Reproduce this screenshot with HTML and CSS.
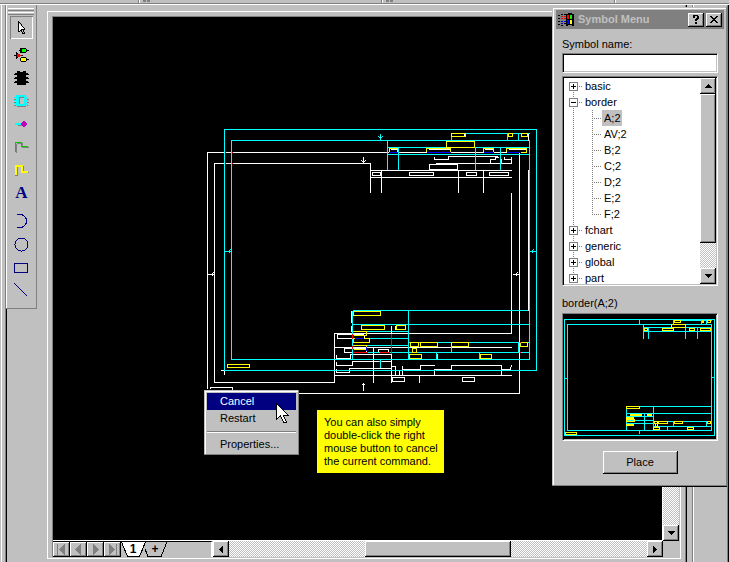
FILE: index.html
```html
<!DOCTYPE html>
<html lang="en">
<head>
<meta charset="utf-8">
<title>Schematic editor</title>
<link rel="stylesheet" href="styles.css">
</head>
<body>
<header class="strip"><i class="strip-a"></i><i class="strip-b"></i><i class="strip-c"></i></header>
<div class="workspace">
  <div class="rail"></div>
  <aside class="dock">
    <div class="toolbar" role="toolbar" aria-label="Drawing tools">
      <div class="grip"></div><div class="grip"></div>
      <button class="tool active" aria-label="Select"><svg width="15" height="15"><path d="M5 3l5 6H7l-2 2z" fill="#fff"/><path d="M4 1h1v11H4zM5 2h1v1H5zM6 3h1v1H6zM7 4h1v2H7zM8 6h1v1H8zM9 7h1v1H9zM10 8h1v1h-1zM7 9h4v1H7zM5 11h1v-1h1v1H6v1H5zM7 10h1v2H7zM8 12h1v2H8zM9 10h1v2H9zM10 12h1v2h-1zM8 13h2v1H8z"/></svg></button>
      <button class="tool group" aria-label="Gates"><svg width="15" height="15"><path d="M0 8h9v1H0zM5 3h10v1H5zM6 12h9v1H6zM2 5h1v7H2zM3 6h1v5H3z"/><path d="M6 1h6v1h1v3h-1v1H6zM7 10h5v1h1v3h-1v1H7v-1H6v-3h1z"/><path d="M3 7h3v1h1v1H6v1H3z" fill="#f00"/><path d="M8 2h4v3H8z" fill="#0f0"/><path d="M7 11h5v3H7z" fill="#ff0"/></svg></button>
      <button class="tool" aria-label="Chip"><svg width="15" height="15"><path d="M3 1h3v1h3V1h3v14H3z"/><path d="M1 3h13v1H1zM0 4h15v1H0zM1 7h13v1H1zM0 8h15v1H0zM1 11h13v1H1zM0 12h15v1H0z"/></svg></button>
      <button class="tool" aria-label="Block"><svg width="15" height="15"><path d="M3 13h9v1H3zM12 4h1v1h-1zM13 6h2v1h-2zM13 9h2v1h-2zM13 12h1v1h-1zM0 6h2v1H0zM0 9h2v1H0zM0 12h2v1H0zM5 4h5v1H6v6H5z" fill="#808080"/><path d="M3 2h9v2h2v2h-2v1h2v2h-2v1h2v2h-2v1H2v-2H0v-1h2V8H0V7h2V5H0V4h2V2zM5 4v7h5V4z" fill="#0ff" fill-rule="evenodd"/></svg></button>
      <button class="tool" aria-label="Pin"><svg width="15" height="15"><path d="M1 7h7v2H1z" fill="#0ff"/><path d="M4 9h5v1H4z" fill="#808080"/><path d="M9 5h2v1h1v1h1v2h-1v1h-1v1H9v-1H8V9H7V7h1V6h1z" fill="#c000c0"/></svg></button>
      <button class="tool" aria-label="Net"><svg width="15" height="15"><path d="M2 5h1v9H2zM3 4h6v1H3zM8 4h1v5H8zM8 8h7v1H8z" fill="#808080"/><path d="M1 3h1v10H1zM2 3h6v1H2zM7 4h1v4H7zM8 7h6v1H8z" fill="#0c0"/></svg></button>
      <button class="tool" aria-label="Bus"><svg width="15" height="15"><path d="M3 5h1v9H1v-1h2zM9 4h1v5H9zM8 11h7v-1h-1v1z" fill="#808080"/><path d="M1 3h8v6h5v2H7V5H3v8H1z" fill="#ff0"/></svg></button>
      <button class="tool letter" aria-label="Text">A</button>
      <button class="tool group arc" aria-label="Arc"><svg width="15" height="15"><path d="M3 .500h3a6.500 6.500 0 0 1 0 13H3" class="navy"/></svg></button>
      <button class="tool" aria-label="Circle"><svg width="15" height="15"><circle cx="7.500" cy="7.500" r="6.500" class="navy"/></svg></button>
      <button class="tool" aria-label="Rectangle"><svg width="15" height="15"><path d="M.500 3.500h13v9H.500z" class="navy"/></svg></button>
      <button class="tool" aria-label="Line"><svg width="15" height="15"><path d="M.500 .500l13 13" class="navy"/></svg></button>
    </div>
  </aside>
  <main class="frame">
    <div class="view">
      <div class="canvas">
        <svg class="sheet" width="609" height="522" viewBox="53 17 609 522" role="img" aria-label="Border sheet">
          <g transform="translate(.5 .5)" fill="none">
            <g stroke="#fff">
              <path d="M207 388V152H519V393H232M214 382V163H370V192M214 382H334V333H511V192M528 169V310M351 310v12M351 325v6M464 133v3M528 133v7"/>
              <path d="M434 156v3h14v-3h49M435 163h76v-7M490 163v-4h5v-2h3M501 163v-5M504 156v3h6M429 164h28v5h-28z"/>
              <path d="M370 170H511M370 177H511M381 170V192M458 170V192M483 170V192M372 172h8v3h-8zM409 172h24v3h-24zM466 172h10v3h-10zM489 172h19v3h-19z"/>
              <path d="M336 334h27M337 334v4h15M364 334v4M334 347H511M344 348h22v4h-22zM378 349h10v3h-10zM395 325v4"/>
              <path d="M336 354v4h14v-4h41M336 361v4h16v-4h39M336 368v4h13v-4h42M334 375H511M373 347V382M391 325V382"/>
              <path d="M391 366h4v9M399 375v-5M402 365v4h18v-4h14M402 370v5M434 375v-6h17v-4h50v10M501 369h9l1-4M419 375v7M437 353v6M404 381h-12v-4h12zM474 381h-12v-4h12z"/>
              <path d="M363 156v7M361 160l2 2 2-2M207 274h7M213 272l-2 2 2 2M512 274h7M517 272l-2 2 2 2M363 390v-7M361 385l2-2 2 2M220 370h9M224 366v8M210 388v-1h22v4"/>
            </g>
            <g stroke="#0ff">
              <path d="M224 129H536V370H224zM231 140H529V359H231zM451 133H529M451 133v7M507 133v7M518 133v7M387 147H529M387 154H529M387 140V169M398 147V169M475 147V169M500 147V169"/>
              <path d="M352 310H529M352 310V359M352 324H529M408 310V359M352 331H408M352 338H408M352 345H408M408 342H529M352 352H529M518 342v10M451 342v10M479 352v7M436 352v7"/>
              <path d="M380 133v7M378 136l2 2 2-2M224 251h7M230 249l-2 2 2 2M529 251h7M533 249l-2 2 2 2M380 367v-7M378 362l2-2 2 2"/>
            </g>
            <g stroke="#fff"><path d="M390 149h6M428 149h21M484 149h8M508 149h17M528 169V310M351 310v12M351 325v6M354 333h12M352 347h14M391 325V331M528 133v7"/></g>
            <path stroke="#ff0" d="M451 133h14v3h-14zM508 133h4v3h-4zM521 133h6v3h-6zM446 141h28v6h-28zM389 151v-3h8v3M426 151v-3h24v3M483 151v-3h10v3M506 151v-3h20v4h-6M353 311h27v4h-27zM361 325h23v4h-23zM396 325h9v4h-9zM353 331h13v4h-13M353 338h16v4h-16zM353 345h13v4h-13M410 342h8v4h-8zM420 342h17v4h-17zM451 342h17v4h-17zM520 342h7v4h-7zM412 348h4v4h-4zM409 354h12v4h-12zM480 354h11v4h-11zM227 364h22v3h-22z"/>
            <path stroke="#00f" d="M388 152h9M426 152h24M483 152h10M506 152h13M354 338h9M366 346v4"/>
            <path stroke="#f00" d="M352 352h15M379 352h10M391 333v20M352 333v5M352 345v3M224 152h1M231 152h1M224 163h1M231 163h1M402 370h1M434 370h1M519 342h1M519 352h1"/>
          </g>
        </svg>
        <div class="menu" role="menu">
          <button class="menu-item chosen" role="menuitem">Cancel</button>
          <button class="menu-item" role="menuitem">Restart</button>
          <hr>
          <button class="menu-item" role="menuitem">Properties...</button>
          <svg class="pointer" width="13" height="21" viewBox="0 0 13 21"><path d="M.500 .500v16l4-4 3 7h3l-3-7h5z" fill="#fff" stroke="#000"/></svg>
        </div>
        <p class="note">You can also simply double-click the right mouse button to cancel the current command.</p>
      </div>
      <div class="vscroll"><button class="sb" aria-label="Scroll down"><svg width="7" height="4"><path d="M0 0h7v1H0zM1 1h5v1H1zM2 2h3v1H2zM3 3h1v1H3z"/></svg></button></div>
      <div class="bottom">
        <div class="tabs">
          <button class="nav" aria-label="First sheet"><svg width="11" height="11"><path d="M1 0h1v11H1zM9 0v11L3 5.500z"/></svg></button>
          <button class="nav" aria-label="Previous sheet"><svg width="11" height="11"><path d="M8 0v11L2 5.500z"/></svg></button>
          <button class="nav" aria-label="Next sheet"><svg width="11" height="11"><path d="M3 0v11l6-5.500z"/></svg></button>
          <button class="nav" aria-label="Last sheet"><svg width="11" height="11"><path d="M2 0v11l6-5.500zM9 0h1v11H9z"/></svg></button>
          <button class="tab"><svg width="25" height="15"><path d="M0 0l6 14h12l6-14z" fill="#fff"/><path d="M.500 0l6 14.500h12l6-14.500" fill="none" stroke="#000"/></svg><b>1</b></button>
          <button class="tab plus"><svg width="25" height="15"><path d="M0 7l3 7.500h13l6-14.500" fill="none" stroke="#000"/></svg><b>+</b></button>
        </div>
        <div class="hscroll">
          <button class="sb" aria-label="Scroll left"><svg width="4" height="7"><path d="M3 0h1v7H3zM2 1h1v5H2zM1 2h1v3H1zM0 3h1v1H0z"/></svg></button>
          <div class="track"></div><div class="thumb"></div><div class="track"></div>
          <button class="sb" aria-label="Scroll right"><svg width="4" height="7"><path d="M0 0h1v7H0zM1 1h1v5H1zM2 2h1v3H2zM3 3h1v1H3z"/></svg></button>
        </div>
      </div>
    </div>
  </main>
  <div class="edge"></div>
  <div class="side"></div>
</div>

<section class="dialog" role="dialog" aria-labelledby="dialog-title">
  <header class="title">
    <svg width="16" height="14"><path d="M0 2h2v1H0zM3 1h2v1H3zM6 1h2v1H6zM0 5h2v1H0zM0 8h2v1H0zM0 11h2v1H0zM6 10h2v1H6zM3 12h2v1H3zM8 1h2V0h4v1h2v12h-2v-1h-4v1H8z"/><path d="M3 3h2v1H3zM6 3h2v1H6zM3 5h2v1H3zM6 5h2v1H6zM9 2h2v4H9z" fill="#f00"/><path d="M3 8h2v1H3zM6 8h2v1H6zM3 10h2v1H3zM9 7h2v4H9z" fill="#00f"/><path d="M12 2h2v4h-2z" fill="#0f0"/><path d="M12 7h2v4h-2z" fill="#ff0"/></svg>
    <h1 id="dialog-title">Symbol Menu</h1>
    <button class="cap" aria-label="Help"><svg width="8" height="9"><path d="M1 0h5v1h1v3H6v1H5v1H3V4h1V3h1V1H3v2H1zM3 7h2v2H3z"/></svg></button>
    <button class="cap" aria-label="Close"><svg width="8" height="8"><path d="M0 0h2v1h1v1h2V1h1V0h2v1H7v1H6v1H5v1h1v1h1v1h1v1H6V6H5V5H3v1H2v1H0V6h1V5h1V4h1V3H2V2H1V1H0z"/></svg></button>
  </header>
  <div class="body">
    <label for="symbol">Symbol name:</label>
    <input id="symbol" type="text">
    <div class="treebox">
      <ul class="tree">
        <li><button class="toggle plus-sign" aria-label="Expand basic"></button><span class="name">basic</span></li>
        <li><button class="toggle" aria-label="Collapse border"></button><span class="name">border</span>
          <ul class="leaves">
            <li><span class="leaf picked">A;2</span></li><li><span class="leaf">AV;2</span></li><li><span class="leaf">B;2</span></li><li><span class="leaf">C;2</span></li><li><span class="leaf">D;2</span></li><li><span class="leaf">E;2</span></li><li><span class="leaf">F;2</span></li>
          </ul></li>
        <li><button class="toggle plus-sign" aria-label="Expand fchart"></button><span class="name">fchart</span></li>
        <li><button class="toggle plus-sign" aria-label="Expand generic"></button><span class="name">generic</span></li>
        <li><button class="toggle plus-sign" aria-label="Expand global"></button><span class="name">global</span></li>
        <li><button class="toggle plus-sign" aria-label="Expand part"></button><span class="name">part</span></li>
      </ul>
      <div class="treescroll">
        <button class="sb" aria-label="Scroll up"><svg width="7" height="4"><path d="M3 0h1v1H3zM2 1h3v1H2zM1 2h5v1H1zM0 3h7v1H0z"/></svg></button>
        <div class="thumb"></div>
        <button class="sb" aria-label="Scroll down"><svg width="7" height="4"><path d="M0 0h7v1H0zM1 1h5v1H1zM2 2h3v1H2zM3 3h1v1H3z"/></svg></button>
      </div>
    </div>
    <p class="caption">border(A;2)</p>
    <div class="preview">
      <svg viewBox="564 315 152 124" role="img" aria-label="Symbol preview"><g transform="translate(.5 .5)" fill="none">
        <path stroke="#0ff" d="M564 319H714V435H564zM567 324H711V430H567zM674 320H711M673 319v5M701 320v4M706 320v4M643 324V338M643 327H711M643 331H711M648 327V338M685 327V338M697 327V338M639 319v4M564 378h3M711 377h3M639 430v3M626 406H711M626 406V430M626 413H711M653 406V430M626 416H653M626 420H653M626 423H653M644 413V430M653 421H711M653 426H711M673 421v5M706 421v5M667 426v4"/>
        <path stroke="#ff0" d="M674 320h6v2h-6zM702 320h1v2h-1zM707 320h3v2h-3zM671 324h14v3h-14zM644 328h3v2h-3zM662 328h11v2h-11zM689 328h5v2h-5zM700 328h10v2h-10zM626 406h13v2h-13zM630 414h11v1h-11zM647 414h4v1h-4zM626 417h7v1h-7zM626 419h8v2h-8zM626 424h7v1h-7zM654 421h3v2h-3zM658 421h9v2h-9zM674 421h8v2h-8zM707 421h3v2h-3zM655 423h2v3h-2zM653 427h6v2h-6zM687 427h6v2h-6zM565 432h11v2h-11z"/>
      </g></svg>
    </div>
    <button class="place">Place</button>
  </div>
</section>
</body>
</html>
```
FILE: styles.css
```css
* { box-sizing: border-box; }
body {
  margin: 0;
  height: 100vh;
  overflow: hidden;
  position: relative;
  display: flex;
  flex-direction: column;
  background: #c0c0c0;
  color: #000;
  font: 11px/13px "Liberation Sans", Arial, sans-serif;
}
button { margin: 0; padding: 0; border: 0; background: #c0c0c0; color: #000; font: inherit; }
svg { display: block; flex: none; shape-rendering: crispEdges; }
ul { margin: 0; padding: 0; list-style: none; }

/* strip above the workspace */
.strip { height: 5px; flex: none; display: flex; border-bottom: 1px solid #fff; box-shadow: inset 0 -1px #808080; }
.strip i { height: 3px; border-right: 1px solid #808080; box-shadow: 1px 0 #fff; }
.strip-a { width: 139px; }
.strip-b { width: 243px; }
.strip-c { width: 233px; }
.strip-b, .strip-c { background: linear-gradient(90deg, transparent 4px, #808080 4px 7px, transparent 7px 8px, #808080 8px 11px, transparent 11px) 0 0 / 100% 2px no-repeat; }

.workspace { flex: 1; min-height: 0; display: flex; }
.rail { width: 6px; background: linear-gradient(90deg, #c0c0c0 1px, #fff 1px 2px, #c0c0c0 2px 5px, #808080 5px); }
.dock { width: 41px; box-shadow: inset 1px 0 #000; }
.toolbar {
  width: 31px;
  padding: 3px 3px 6px 4px;
  display: flex;
  flex-direction: column;
  background: #c0c0c0;
  border-right: 1px solid #808080;
  border-bottom: 1px solid #808080;
  box-shadow: inset 1px 0 #fff;
}
.grip { height: 3px; margin: 0 -1px 1px -2px; border-top: 1px solid #fff; border-bottom: 1px solid #808080; }
.tool { height: 23px; display: flex; align-items: center; justify-content: center; }
.tool.active { box-shadow: inset 1px 1px #808080, inset -1px -1px #fff; }
.tool.active + .group { margin-top: 4px; }
.arc { margin-top: 6px; }
.letter { font: bold 17px/23px "Liberation Serif", serif; color: #000080; }
.navy { fill: none; stroke: #000080; }

.frame { flex: 1; min-width: 0; margin: 6px 0 3px; padding: 4px 1px 1px 4px; border: 1px solid #fff; }
.view { height: 100%; display: grid; grid-template: 1fr 16px / 1fr 16px; border-left: 1px solid #808080; border-top: 1px solid #808080; }
.canvas { position: relative; min-width: 0; min-height: 0; overflow: hidden; background: #000; border-right: 1px solid #fff; border-bottom: 1px solid #fff; }
.vscroll, .hscroll .track, .treescroll { background: repeating-conic-gradient(#c0c0c0 0 25%, #fff 0 50%) 0 0 / 2px 2px; }
.vscroll { display: flex; flex-direction: column; justify-content: flex-end; }
.sb, .thumb, .nav, .cap { box-shadow: inset -1px -1px #000, inset 1px 1px #fff, inset -2px -2px #808080; background: #c0c0c0; }
.sb { width: 16px; height: 16px; flex: none; display: flex; align-items: center; justify-content: center; }

.bottom { display: flex; min-width: 0; }
.tabs { width: 160px; display: flex; border-top: 1px solid #000; border-right: 2px solid #fff; }
.nav { width: 17px; display: flex; align-items: center; justify-content: center; }
.nav svg { fill: #808080; }
.tab { position: relative; width: 24px; background: none; }
.tab svg { position: absolute; left: 0; top: 0; }
.tab b { position: relative; font-size: 12px; line-height: 15px; }
.plus { width: 20px; }
.hscroll { flex: 1; display: flex; }
.hscroll .track { flex: 136; }
.hscroll .thumb { flex: 146; }

.edge { width: 6px; background: linear-gradient(90deg, #c0c0c0 4px, #808080 4px 5px, #000 5px); }
.side { width: 42px; background: linear-gradient(90deg, #c0c0c0 5px, #808080 5px 6px, #fff 6px 7px, #c0c0c0 7px 40px, #808080 40px 41px, #000 41px); }

/* context menu and hint on the canvas */
.menu { position: absolute; left: 151px; top: 373px; width: 95px; padding: 3px 3px 2px; background: #c0c0c0; box-shadow: inset -1px -1px #808080, inset 1px 1px #c0c0c0, inset 2px 2px #fff; }
.menu-item { display: block; width: 100%; height: 17px; padding-left: 13px; text-align: left; }
.chosen { background: #000080; color: #fff; }
.menu hr { height: 2px; margin: 4px 0 3px; border: 0; border-top: 1px solid #808080; border-bottom: 1px solid #fff; }
.pointer { position: absolute; left: 72px; top: 13px; }
.note { position: absolute; left: 264px; top: 393px; width: 127px; margin: 0; padding: 6px 2px 5px 7px; background: #ff0; }

.dialog { position: absolute; right: 2px; top: 7px; width: 175px; padding: 3px 3px 12px 4px; background: #c0c0c0; box-shadow: inset -1px -1px #808080, inset 1px 1px #c0c0c0, inset 2px 2px #fff, 0 1px #000; }
.title { height: 19px; padding: 0 2px; display: flex; align-items: center; gap: 2px; background: #808080; color: #c0c0c0; }
.title h1 { flex: 1; margin: 0 0 0 2px; font-size: 11px; line-height: 19px; }
.cap { width: 16px; height: 14px; display: flex; align-items: center; justify-content: center; }
.body { padding: 9px 6px 0; display: flex; flex-direction: column; }
.body input, .treebox, .preview { border: 1px solid; border-color: #808080 #fff #fff #808080; box-shadow: inset 1px 1px #000, inset -1px -1px #c0c0c0; }
.body input { height: 20px; width: 100%; margin: 2px 0 3px; padding: 2px 4px; border-radius: 0; background: #fff; font: inherit; outline: 0; }
.treebox { height: 210px; padding: 1px; display: flex; background: #fff; }
.tree { flex: 1; overflow: hidden; background: repeating-linear-gradient(#808080 0 1px, transparent 1px 2px) 9px 8px / 1px 100% no-repeat; }
.tree > li { padding-left: 5px; line-height: 16px; }
.toggle { width: 9px; height: 9px; border: 1px solid #808080; vertical-align: 0; background: linear-gradient(#000, #000) center / 5px 1px no-repeat, #fff; }
.plus-sign { background: linear-gradient(#000, #000) center / 5px 1px no-repeat, linear-gradient(#000, #000) center / 1px 5px no-repeat, #fff; }
.name { display: inline-block; height: 16px; vertical-align: top; padding-left: 7px; background: repeating-linear-gradient(90deg, transparent 0 1px, #808080 1px 2px) 0 8px / 4px 1px no-repeat; }
.leaves { margin-left: 23px; background: repeating-linear-gradient(#808080 0 1px, transparent 1px 2px) 0 0 / 1px 105px no-repeat; }
.leaves li { height: 16px; padding-left: 10px; background: repeating-linear-gradient(90deg, #808080 0 1px, transparent 1px 2px) 0 8px / 9px 1px no-repeat; }
.leaf { display: inline-block; height: 16px; padding: 0 1px 0 2px; vertical-align: top; }
.picked { background: #c0c0c0; }
.treescroll { width: 16px; display: flex; flex-direction: column; }
.treescroll .thumb { height: 149px; }
.treescroll .sb:last-child { margin-top: auto; }
.caption { margin: 11px 0 3px; }
.preview { padding: 1px; background: #000; }
.preview svg { width: 100%; height: auto; }
.place { width: 75px; height: 23px; margin: 10px auto 0; box-shadow: inset -1px -1px #000, inset 1px 1px #fff, inset -2px -2px #808080; }
```
